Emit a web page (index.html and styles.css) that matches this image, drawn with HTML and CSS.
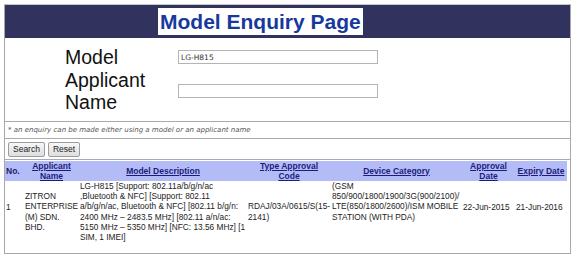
FILE: index.html
```html
<!DOCTYPE html>
<html lang="en">
<head>
    <meta charset="UTF-8">
    <title>Model Enquiry Page</title>
    <link rel="stylesheet" href="styles.css">
</head>
<body>

    <div class="page">
        <!-- Judul -->
        <div class="banner">
            <h1 class="title">Model Enquiry Page</h1>
        </div>

        <!-- Form pencarian -->
        <form class="enquiry">
            <label class="field-label" for="model">Model</label>
            <input id="model" class="field-input" type="text" value="LG-H815">
            <label class="field-label" for="applicant">Applicant Name</label>
            <input id="applicant" class="field-input" type="text">
        </form>

        <p class="hint">* an enquiry can be made either using a model or an applicant name</p>

        <div class="actions">
            <button class="btn" type="button">Search</button>
            <button class="btn" type="button">Reset</button>
        </div>

        <!-- Hasil -->
        <div class="results-wrap">
            <table class="results">
                <colgroup>
                    <col class="c-no">
                    <col class="c-app">
                    <col class="c-desc">
                    <col class="c-code">
                    <col class="c-cat">
                    <col class="c-appr">
                    <col class="c-exp">
                </colgroup>
                <thead>
                    <tr>
                        <th class="no">No.</th>
                        <th><a href="#">Applicant Name</a></th>
                        <th><a href="#">Model Description</a></th>
                        <th><a href="#">Type Approval Code</a></th>
                        <th><a href="#">Device Category</a></th>
                        <th><a href="#">Approval Date</a></th>
                        <th><a href="#">Expiry Date</a></th>
                    </tr>
                </thead>
                <tbody>
                    <tr>
                        <td class="lift">1</td>
                        <td>ZITRON ENTERPRISE (M) SDN. BHD.</td>
                        <td>LG-H815 [Support: 802.11a/b/g/n/ac ,Bluetooth &amp; NFC] [Support: 802.11 a/b/g/n/ac, Bluetooth &amp; NFC] [802.11 b/g/n: 2400 MHz – 2483.5 MHz] [802.11 a/n/ac: 5150 MHz – 5350 MHz] [NFC: 13.56 MHz] [1 SIM, 1 IMEI]</td>
                        <td>RDAJ/03A/0615/S(15-<wbr>2141)</td>
                        <td class="top">(GSM 850/900/1800/1900/3G(900/2100)/<wbr>LTE(850/1800/2600)/ISM MOBILE STATION (WITH PDA)</td>
                        <td class="lift date">22-Jun-2015</td>
                        <td class="lift date">21-Jun-2016</td>
                    </tr>
                </tbody>
            </table>
        </div>
    </div>

</body>
</html>
```

FILE: styles.css
```css
/* --- Halaman --- */
body {
    margin: 0;
    font-family: "Liberation Sans", Arial, sans-serif;
    background: #ffffff;
    color: #222;
}

.page {
    width: 565px;
    margin: 4px 0 0 4px;
    border: 1px solid #a8a8a8;
    border-top-color: #c4c8c4;
}

/* Judul */
.banner {
    background-color: #32325e;
    padding: 3px 0 3px 153px;
}

.title {
    display: inline-block;
    margin: 0;
    padding: 0 2px;
    background: #ffffff;
    color: #17399c;
    font-size: 21px;
    font-weight: bold;
    line-height: 27px;
}

/* Form */
.enquiry {
    display: grid;
    grid-template-columns: 113px 200px;
    align-items: center;
    padding: 8px 0 7px 60px;
    border-bottom: 1px solid #aaaaaa;
}

.field-label {
    font-size: 19.5px;
    line-height: 22.5px;
    color: #111;
}

.field-input {
    box-sizing: border-box;
    width: 200px;
    height: 14px;
    margin: 0;
    padding: 0 2px;
    border: 1px solid #b4b4b4;
    font-family: "DejaVu Sans", Tahoma, sans-serif;
    font-size: 7.5px;
    color: #333;
}

.hint {
    margin: 0;
    padding: 0 3px;
    height: 16px;
    line-height: 16px;
    border-bottom: 1px solid #aaaaaa;
    font-family: "DejaVu Sans", Verdana, sans-serif;
    font-style: italic;
    font-size: 7px;
    color: #555;
}

.actions {
    display: flex;
    gap: 3px;
    padding: 3px 3px 2px;
    border-bottom: 1px solid #aaaaaa;
}

.btn {
    height: 15px;
    padding: 0 4px;
    border: 1px solid #9c9c9c;
    border-radius: 2px;
    background: linear-gradient(#f7f7f7, #dedede);
    font-family: "Liberation Sans", Arial, sans-serif;
    font-size: 8.5px;
    color: #222;
}

/* Tabel hasil */
.results-wrap {
    padding: 1px 0 11px;
}

.results {
    table-layout: fixed;
    width: 562px;
    border-collapse: collapse;
    font-size: 8.3px;
    line-height: 10.2px;
}

.c-no { width: 19px; }
.c-app { width: 55px; }
.c-desc { width: 168px; }
.c-code { width: 84px; }
.c-cat { width: 131px; }
.c-appr { width: 53px; }
.c-exp { width: 52px; }

.results th {
    background-color: #b4bcf8;
    padding: 0 2px;
    font-size: 8.5px;
    font-weight: bold;
    color: #1c1c6c;
    vertical-align: middle;
}

.results th.no {
    text-align: left;
    padding-left: 1px;
}

.results th a {
    color: #1c1c7c;
    text-decoration: underline;
}

.results td {
    padding: 0 1px;
    vertical-align: middle;
    color: #222;
}

.results td.top {
    vertical-align: top;
}

.results td.lift {
    padding-bottom: 8px;
}

.results td.date {
    white-space: nowrap;
}
```
